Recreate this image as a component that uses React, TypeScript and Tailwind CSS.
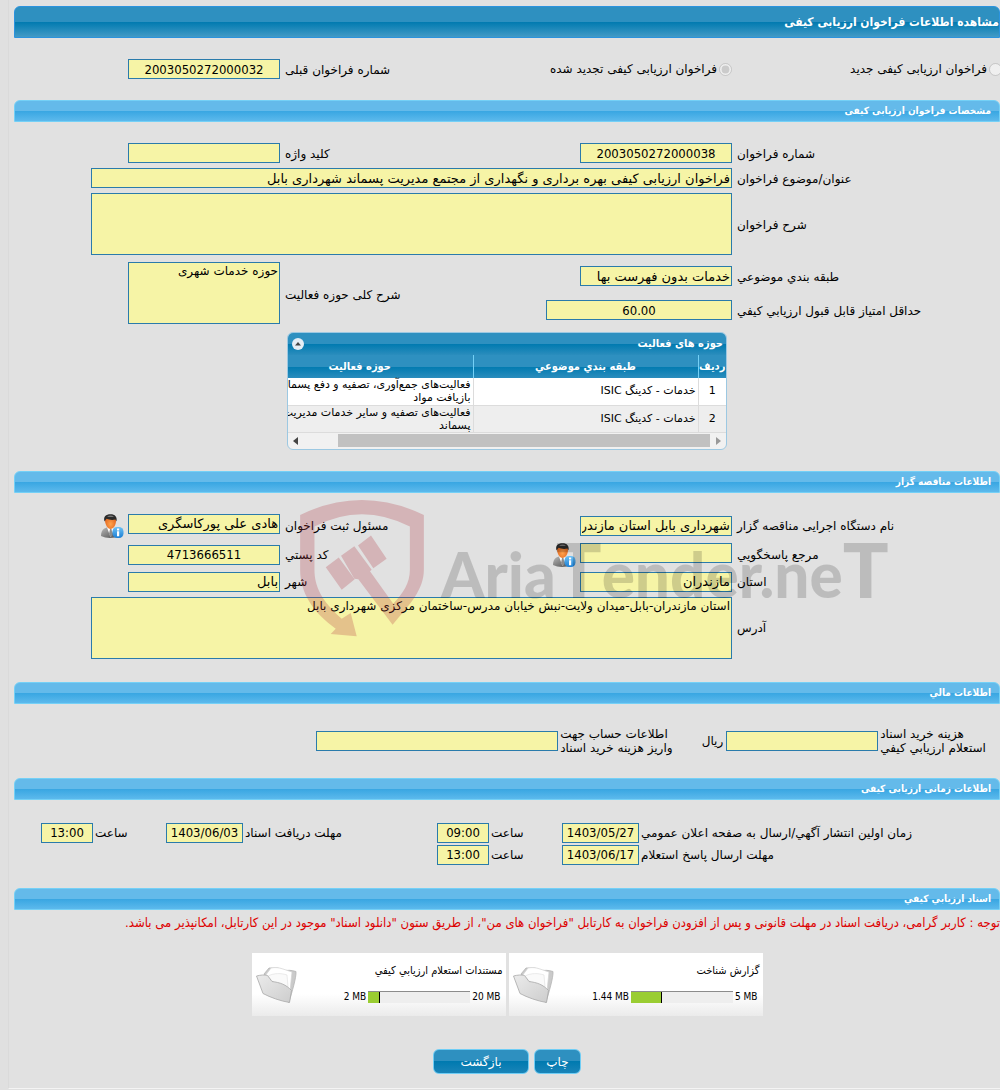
import type { ReactNode } from 'react'
import clsx from 'clsx'

const inputClass =
  'h-5 max-w-full shrink-0 rounded-none border border-[#2a7bab] bg-[#f6f4a6] px-px text-[13px] leading-4 text-black outline-none'
const areaClass =
  'block h-[62px] max-w-full resize-none rounded-none border border-[#2a7bab] bg-[#f6f4a6] px-px text-[12px] leading-4 text-black outline-none'
const numberClass = "text-center font-['DejaVu_Sans_Condensed','DejaVu_Sans',sans-serif]"

interface TextFieldProps {
  id: string
  value?: string
  className?: string
}

function TextField({ id, value = '', className }: TextFieldProps) {
  return <input id={id} type="text" readOnly value={value} className={clsx(inputClass, className)} />
}

function Label({ htmlFor, children }: { htmlFor: string; children: ReactNode }) {
  return (
    <label htmlFor={htmlFor} className="self-center pt-px text-left whitespace-nowrap">
      {children}
    </label>
  )
}

function SectionBar({ children }: { children: ReactNode }) {
  return (
    <h2 className="flex h-[22px] items-center rounded-t-md border border-[#74d0f6] bg-[linear-gradient(#64baea_50%,#38a6e2_50%,#5cb9ec)] pr-2 font-['DejaVu_Sans_Condensed','DejaVu_Sans',sans-serif] text-[10px] font-bold text-white">
      {children}
    </h2>
  )
}

function FormGrid({ children, className }: { children: ReactNode; className?: string }) {
  return (
    <div className={clsx('grid grid-cols-[263fr_287fr_155fr_266fr] gap-x-[5px]', className)}>
      {children}
    </div>
  )
}

function PersonButton({ label }: { label: string }) {
  return (
    <button type="button" aria-label={label} className="size-6 shrink-0">
      <svg viewBox="0 0 24 24" className="size-6">
        <defs>
          <linearGradient id="suit" x1="0" y1="0" x2="1" y2="1">
            <stop offset="0" stopColor="#b8b8b8" />
            <stop offset="1" stopColor="#4a4a4a" />
          </linearGradient>
          <radialGradient id="face" cx=".5" cy=".65" r=".6">
            <stop offset="0" stopColor="#ffa34d" />
            <stop offset="1" stopColor="#e0621c" />
          </radialGradient>
          <linearGradient id="info" x1="0" y1="0" x2="0" y2="1">
            <stop offset="0" stopColor="#6cc0f5" />
            <stop offset="1" stopColor="#1c7fd4" />
          </linearGradient>
        </defs>
        <path d="M1 22c0-5 2-7.500 6-8.500h7c3 1 4.500 3 5 8.500-5 2.500-13 2.500-18 0z" fill="url(#suit)" />
        <path d="M7 13.500l3.500 9.500 4-9.500z" fill="#fff" />
        <path d="M10 15l-1 5 2 3.500 1.500-3.500-1-5z" fill="#8c8c8c" />
        <path d="M5 6c0-3 2-5 5.500-5S16 3 16 6.500c0 4.500-2.500 8.500-5.500 8.500S5 10.500 5 6z" fill="url(#face)" />
        <path d="M4.500 7.500C3 2.500 6 .300 10.500.300S17.500 3 16.500 7.500L15.500 5.500c-3 .7-6.500.4-9-.7z" fill="#2b2b2b" />
        <path d="M7 2.500c2-1.200 5-1.200 7 0-2 .8-5 .8-7 0z" fill="#777" />
        <rect x="12.500" y="13" width="11" height="11" rx="4.500" fill="url(#info)" />
        <path d="M17 14.500h2.200v2H17zM17 17.300h2.200v5H17z" fill="#fff" />
      </svg>
    </button>
  )
}

function FolderIcon({ id }: { id: string }) {
  return (
    <svg viewBox="0 0 42 40" className="h-10 w-[42px] shrink-0">
      <defs>
        <linearGradient id={id} x1="0" y1="0" x2="1" y2="1">
          <stop offset="0" stopColor="#ebebeb" />
          <stop offset="1" stopColor="#cdcdcd" />
        </linearGradient>
      </defs>
      <path d="M9 9l5-6h9l6 3c3-1 7-1 12 .5.5 6-4 20-7 31l-10-9z" fill="#cacaca" stroke="#b4b4b4" strokeWidth=".8" />
      <path d="M10 11l6-8c4-.8 8-.5 12 1l9 3-2 19-18-8z" fill="#fff" stroke="#d2d2d2" strokeWidth=".7" />
      <path d="M13 11c6-3 13-3 19-1l1 12-15-5z" fill="#fafafa" stroke="#dedede" strokeWidth=".6" />
      <path d="M1.500 11c4-1 8-1.500 11-.5l4.500 6c8 1 14 3 19.500 9l-2 12c-9-1.500-19-5-26.500-9z" fill={`url(#${id})`} stroke="#a8a8a8" strokeWidth=".8" />
    </svg>
  )
}

function Watermark() {
  return (
    <div dir="ltr" className="pointer-events-none absolute top-[29px] left-[286px] flex items-start" aria-hidden="true">
      <svg viewBox="660 60 375 412" className="h-[137px] w-[125px] fill-[#b0303c] opacity-25">
        <path d="M660 105Q845 15 1032 105V270C1032 330 990 375 938 435L835 298 823 297 783 228 823 199 875 270 870 274 940 372C970 340 990 310 990 270V140Q845 66 703 140V270C703 320 725 365 785 417L812 400 830 470 752 463 767 447C700 400 660 340 660 270Z" />
        <path d="M873 167L920 237 880 265 834 197ZM776 233L824 298 785 330 737 262Z" />
      </svg>
      <div className="ml-4 pt-6 font-['Lato','Liberation_Sans',sans-serif] text-[62px] leading-[90px] font-black whitespace-nowrap text-black/16">
        Aria<span className="text-[76px]">T</span>ender.ne<span className="text-[76px]">T</span>
      </div>
    </div>
  )
}

const activities = [
  { topic: 'خدمات - كدينگ ISIC', lines: ['فعالیت‌های جمع‌آوری، تصفیه و دفع پسماند؛', 'بازیافت مواد'] },
  { topic: 'خدمات - كدينگ ISIC', lines: ['فعالیت‌های تصفیه و سایر خدمات مدیریت', 'پسماند'] },
]

const headCell =
  "h-[23px] border-l border-[#74d0f6] p-0 text-center font-['DejaVu_Sans_Condensed','DejaVu_Sans',sans-serif] font-bold text-white"

function ActivityTable() {
  return (
    <div className="mx-auto mt-2 w-[440px] max-w-full overflow-hidden rounded-md border border-[#9cc8e2] bg-[#f1f1f1] text-[11px]">
      <div className="flex h-[22px] items-center justify-between bg-[linear-gradient(#2e90c0_50%,#007ab0_50%,#2b8dbd)] pr-[3px] pl-1 font-['DejaVu_Sans_Condensed','DejaVu_Sans',sans-serif] font-bold text-white">
        <h3>حوزه های فعالیت</h3>
        <button type="button" aria-label="بستن" className="flex size-3 items-center justify-center rounded-full bg-[#e4edf5]">
          <svg viewBox="0 0 8 8" className="size-2 fill-[#444]">
            <path d="M1 5.500L4 2l3 3.500z" />
          </svg>
        </button>
      </div>
      <table className="w-[480px] table-fixed border-collapse">
        <thead className="bg-[linear-gradient(#2e90c0_50%,#007ab0_50%,#2b8dbd)]">
          <tr>
            <th className={clsx(headCell, 'w-[28px]')}>ردیف</th>
            <th className={clsx(headCell, 'w-[225px]')}>طبقه بندي موضوعي</th>
            <th className={headCell}>حوزه فعالیت</th>
          </tr>
        </thead>
        <tbody>
          {activities.map((row, i) => (
            <tr key={i} className="h-[27px] border-b border-[#dcdcdc] bg-white even:bg-[#eeeeee]">
              <td className="border-l border-[#dcdcdc] p-0 text-center">{i + 1}</td>
              <td className="border-l border-[#dcdcdc] p-0 pr-[2px]">{row.topic}</td>
              <td className="p-0 pr-[2px] leading-[13px] whitespace-nowrap">
                {row.lines[0]}
                <br />
                {row.lines[1]}
              </td>
            </tr>
          ))}
        </tbody>
      </table>
      <div dir="ltr" className="flex h-4 items-center px-1">
        <svg viewBox="0 0 8 8" className="size-2 fill-[#444]">
          <path d="M6 0v8L1 4z" />
        </svg>
        <div className="mr-1 ml-[38px] h-[13px] grow bg-[#c1c1c1]" />
        <svg viewBox="0 0 8 8" className="size-2 fill-[#999]">
          <path d="M2 0v8l5-4z" />
        </svg>
      </div>
    </div>
  )
}

interface DocumentCardProps {
  id: string
  title: string
  used: string
  total: string
  percent: number
}

function DocumentCard({ id, title, used, total, percent }: DocumentCardProps) {
  return (
    <div className="flex h-[63px] w-[254px] justify-between bg-[linear-gradient(#fff_65%,#ebebeb)] px-[3px] pt-3 font-['DejaVu_Sans_Condensed','DejaVu_Sans',sans-serif] text-[10px]">
      <div>
        <a href="#docs" className="block h-[26px] text-[11px] leading-3 whitespace-nowrap">
          {title}
        </a>
        <div className="flex h-3 items-center gap-[2px] pr-[2px]">
          <span dir="ltr">{total}</span>
          <div dir="ltr" className="h-3 w-[102px] border-t border-[#8c8c8c] bg-[#eeeeee]">
            <div className="h-full border-r border-black bg-[#9acd32]" style={{ width: `${percent}%` }} />
          </div>
          <span dir="ltr">{used}</span>
        </div>
      </div>
      <FolderIcon id={id} />
    </div>
  )
}

const buttonClass =
  'h-[25px] rounded-md border border-[#6fcdf5] bg-[linear-gradient(#2e90c0_50%,#007ab0_50%,#1a84b8)] pt-px text-[12px] text-white'

const timeGrid = 'grid grid-cols-[359fr_98fr_48fr_130fr_112fr_98fr_48fr_79fr] gap-x-[2px] gap-y-[2px] py-[23px]'

export default function App() {
  return (
    <div className="min-h-screen overflow-hidden bg-[#e0e0e0] pl-2 font-['DejaVu_Sans',sans-serif] text-[12px] leading-[14px] text-black">
      <main dir="rtl" className="border-b border-l border-b-[#f4f4f4] border-l-[#dadada] bg-[#e1e1e1] pt-[6px] pb-[14px] pl-[5px]">
        <h1 className="flex h-8 items-center rounded-t-md border border-[#2b93de] bg-[linear-gradient(#2e90c0_50%,#007ab0_50%,#429ac6)] font-['DejaVu_Sans_Condensed','DejaVu_Sans',sans-serif] text-[12px] font-bold text-white">
          مشاهده اطلاعات فراخوان ارزیابی کیفی
        </h1>

        <FormGrid className="py-[21px]">
          <label className="-mr-[2px] flex items-center gap-[2px] whitespace-nowrap">
            <input type="radio" name="callType" disabled className="size-[13px] shrink-0" />
            فراخوان ارزیابی کیفی جدید
          </label>
          <label className="flex items-center gap-[2px] whitespace-nowrap">
            <input type="radio" name="callType" disabled defaultChecked className="size-[13px] shrink-0" />
            فراخوان ارزیابی کیفی تجدید شده
          </label>
          <Label htmlFor="prevNumber">شماره فراخوان قبلی</Label>
          <TextField id="prevNumber" value="2003050272000032" className={clsx(numberClass, 'w-[152px]')} />
        </FormGrid>

        <SectionBar>مشخصات فراخوان ارزیابی کیفی</SectionBar>
        <FormGrid className="gap-y-[5px] pt-[21px]">
          <Label htmlFor="number">شماره فراخوان</Label>
          <TextField id="number" value="2003050272000038" className={clsx(numberClass, 'w-[152px]')} />
          <Label htmlFor="keyword">کلید واژه</Label>
          <TextField id="keyword" className="w-[152px]" />
          <Label htmlFor="subject">عنوان/موضوع فراخوان</Label>
          <TextField
            id="subject"
            value="فراخوان ارزیابی کیفی بهره برداری و نگهداری از مجتمع مدیریت پسماند شهرداری بابل"
            className="col-span-3 w-[641px]"
          />
          <Label htmlFor="description">شرح فراخوان</Label>
          <textarea id="description" readOnly className={clsx(areaClass, 'col-span-3 w-[641px]')} />
        </FormGrid>
        <FormGrid className="items-center gap-y-[6px] pt-[7px]">
          <Label htmlFor="category">طبقه بندي موضوعي</Label>
          <TextField id="category" value="خدمات بدون فهرست بها" className="w-[152px]" />
          <div className="row-span-2 pt-1 text-left">
            <label htmlFor="scope">شرح کلی حوزه فعالیت</label>
          </div>
          <textarea id="scope" readOnly defaultValue="حوزه خدمات شهری" className={clsx(areaClass, 'row-span-2 w-[152px]')} />
          <Label htmlFor="minScore">حداقل امتیاز قابل قبول ارزيابي كيفي</Label>
          <TextField id="minScore" value="60.00" className={clsx(numberClass, 'w-[186px]')} />
        </FormGrid>

        <ActivityTable />

        <div className="relative mt-[21px]">
          <SectionBar>اطلاعات مناقصه گزار</SectionBar>
          <FormGrid className="items-center gap-y-[5px] py-[21px] pb-[23px]">
            <Label htmlFor="agency">نام دستگاه اجرایی مناقصه گزار</Label>
            <TextField id="agency" value="شهرداری بابل استان مازندران" className="w-[152px]" />
            <Label htmlFor="registrar">مسئول ثبت فراخوان</Label>
            <div className="flex items-start gap-1">
              <TextField id="registrar" value="هادی علی پورکاسگری" className="w-[152px]" />
              <PersonButton label="مسئول ثبت" />
            </div>
            <Label htmlFor="contact">مرجع پاسخگويي</Label>
            <div className="flex items-start gap-1">
              <TextField id="contact" className="w-[152px]" />
              <PersonButton label="مرجع پاسخگويي" />
            </div>
            <Label htmlFor="postalCode">کد پستي</Label>
            <TextField id="postalCode" value="4713666511" className={clsx(numberClass, 'w-[152px]')} />
            <Label htmlFor="province">استان</Label>
            <TextField id="province" value="مازندران" className="w-[152px]" />
            <Label htmlFor="city">شهر</Label>
            <TextField id="city" value="بابل" className="w-[152px]" />
            <Label htmlFor="address">آدرس</Label>
            <textarea
              id="address"
              readOnly
              defaultValue="استان مازندران-بابل-میدان ولایت-نبش خیابان مدرس-ساختمان مرکزی شهرداری بابل"
              className={clsx(areaClass, 'col-span-3 w-[641px]')}
            />
          </FormGrid>
          <Watermark />
        </div>

        <SectionBar>اطلاعات مالي</SectionBar>
        <div className="grid grid-cols-[120fr_204fr_111fr_545fr] items-center gap-x-[2px] py-[23px]">
          {/* two-line labels, both lines share the width of the longer one */}
          <label htmlFor="cost" className="text-left whitespace-nowrap">
            هزینه خرید اسناد
            <br />
            استعلام ارزيابي كيفي
          </label>
          <div className="flex items-center gap-[3px]">
            <TextField id="cost" className="w-[152px]" />
            <span>ریال</span>
          </div>
          <label htmlFor="account" className="text-left whitespace-nowrap">
            اطلاعات حساب جهت
            <br />
            واریز هزینه خرید اسناد
          </label>
          <TextField id="account" className="w-[242px]" />
        </div>

        <SectionBar>اطلاعات زمانی ارزیابی کیفی</SectionBar>
        <div className={timeGrid}>
          <Label htmlFor="publishDate">زمان اولین انتشار آگهي/ارسال به صفحه اعلان عمومي</Label>
          <TextField id="publishDate" value="1403/05/27" className={clsx(numberClass, 'w-[77px]')} />
          <Label htmlFor="publishTime">ساعت</Label>
          <TextField id="publishTime" value="09:00" className={clsx(numberClass, 'w-[52px]')} />
          <Label htmlFor="receiveDate">مهلت دریافت اسناد</Label>
          <TextField id="receiveDate" value="1403/06/03" className={clsx(numberClass, 'w-[77px]')} />
          <Label htmlFor="receiveTime">ساعت</Label>
          <TextField id="receiveTime" value="13:00" className={clsx(numberClass, 'w-[52px]')} />
          <Label htmlFor="replyDate">مهلت ارسال پاسخ استعلام</Label>
          <TextField id="replyDate" value="1403/06/17" className={clsx(numberClass, 'w-[77px]')} />
          <Label htmlFor="replyTime">ساعت</Label>
          <TextField id="replyTime" value="13:00" className={clsx(numberClass, 'w-[52px]')} />
        </div>

        <SectionBar>اسناد ارزيابي كيفي</SectionBar>
        <p className="pt-[6px] font-['DejaVu_Sans_Condensed','DejaVu_Sans',sans-serif] text-[13px] whitespace-nowrap text-[#dd0000]">
          توجه : کاربر گرامی، دریافت اسناد در مهلت قانونی و پس از افزودن فراخوان به کارتابل "فراخوان های من"، از طریق ستون "دانلود اسناد" موجود در این کارتابل، امکانپذیر می باشد.
        </p>

        <div className="flex justify-center gap-[3px] pt-[23px]">
          <DocumentCard id="folder-report" title="گزارش شناخت" used="1.44 MB" total="5 MB" percent={30} />
          <DocumentCard id="folder-docs" title="مستندات استعلام ارزيابي كيفي" used="2 MB" total="20 MB" percent={12} />
        </div>

        <div className="flex justify-center gap-[5px] pt-[33px]">
          <button type="button" className={clsx(buttonClass, 'w-[47px]')}>چاپ</button>
          <button type="button" className={clsx(buttonClass, 'w-24')}>بازگشت</button>
        </div>
      </main>
    </div>
  )
}
